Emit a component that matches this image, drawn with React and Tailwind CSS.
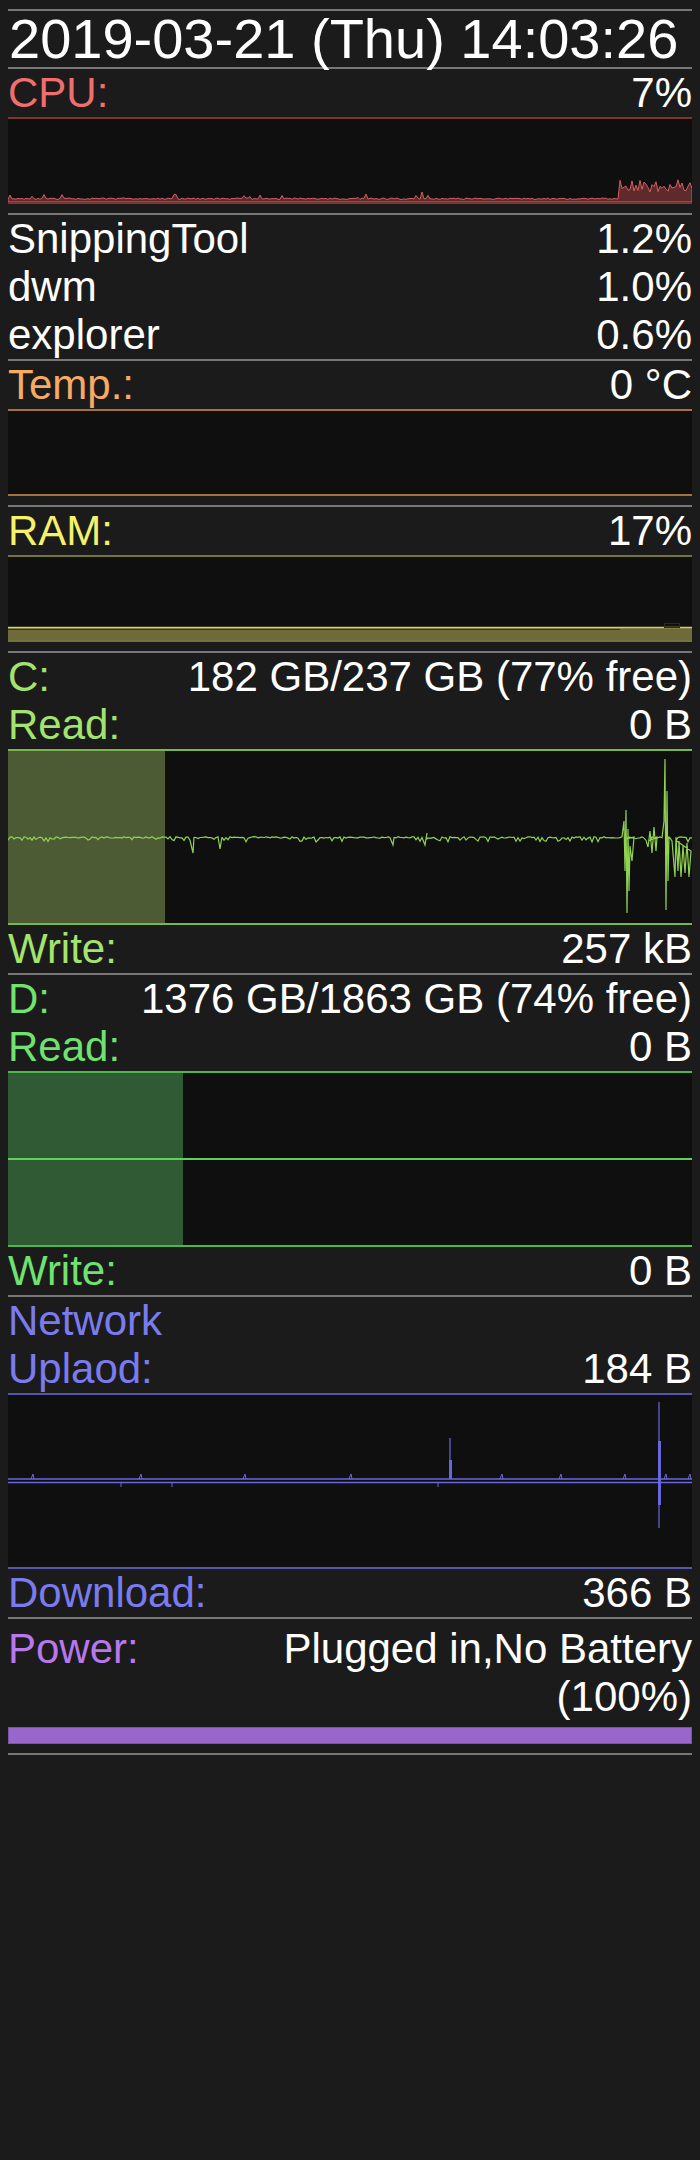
import React from 'react';

// deterministic noise so the graphs don't change between renders
const rng = (seed) => {
    let s = seed;
    return () => {
        s = (s * 16807) % 2147483647;
        return (s - 1) / 2147483646;
    };
};

const W = 684;

const cpuPath = (() => {
    const r = rng(11);
    const pts = [];
    for (let x = 0; x <= W; x += 2) {
        let v;
        if (x < 611) {
            v = 2.5 + r() * 1.5;
            if (r() < 0.05) v += 1.5 + r() * 3;
            if (x === 414) v = 10;
        } else {
            v = 9 + r() * 8;
            if (r() < 0.18) v += 3 + r() * 9;
        }
        pts.push(`${x},${(83 - v).toFixed(1)}`);
    }
    return `M0,83 L${pts.join(' L')} L${W},83 Z`;
})();

const cReadPath = (() => {
    const r = rng(5);
    const c = 86;
    const spikes = {
        185: [[185, 102], [186, 86]],
        213: [[212, 98], [213, 92], [214, 86]],
        385: [[385, 94]],
        417: [[417, 94], [419, 82]],
        616: [[616, 70], [617, 120], [618, 59], [619, 162], [620, 78], [621, 140], [622, 95], [624, 110], [626, 86]],
        640: [[640, 96], [642, 80], [644, 102], [646, 76], [648, 100], [649, 86]],
        656: [[656, 70], [657, 8], [658, 159], [659, 40], [660, 130], [661, 86]],
        667: [[667, 126], [668, 86], [670, 120], [671, 90], [673, 126], [675, 95], [677, 122], [679, 92], [681, 126], [683, 100]],
    };
    const pts = [];
    for (let x = 0; x <= W; x += 2) {
        const key = Object.keys(spikes).find((k) => +k === x || +k === x + 1);
        if (key) {
            spikes[key].forEach(([px, py]) => pts.push(`${px},${py}`));
            continue;
        }
        const d = r() < 0.3 ? r() * 5 : r() * 1.5 - 0.3;
        pts.push(`${x},${(c + d).toFixed(1)}`);
    }
    return `M${pts.join(' L')}`;
})();

const Sep = () => <div className="h-[2px] bg-[#777777]" />;

const Row = ({ label, value, color }) => (
    <div className="flex h-[48px] justify-between leading-[48px] whitespace-nowrap">
        <span className={color}>{label}</span>
        <span className="text-white">{value}</span>
    </div>
);

const SmallChart = ({ border, children }) => (
    <div className="mb-[9px]">
        <div className={`h-[87px] border-y-2 bg-[#0f0f0f] ${border}`}>
            <svg width="100%" height="83" viewBox="0 0 684 83" preserveAspectRatio="none" className="block">
                {children}
            </svg>
        </div>
    </div>
);

const BigChart = ({ border, children }) => (
    <div className={`h-[176px] border-y-2 bg-[#0f0f0f] ${border}`}>
        <svg width="100%" height="172" viewBox="0 0 684 172" preserveAspectRatio="none" className="block">
            {children}
        </svg>
    </div>
);

const netBumps = [25, 133, 237, 343, 494, 553, 617, 658, 682];
const netTicks = [113, 164, 430];

export default function App() {
    return (
        <div className="min-h-[2160px] bg-[#1b1b1b] px-[8px] pt-[9px] font-['Liberation_Sans',Arial,sans-serif] text-[42px]">
            <Sep />
            <div className="h-[56px] whitespace-nowrap pl-[1px] text-[56px] leading-[56px] text-white">
                2019-03-21 (Thu) 14:03:26
            </div>
            <Sep />

            <Row label="CPU:" value="7%" color="text-[#f06e6e]" />
            <SmallChart border="border-[#7e3434]">
                <path d={cpuPath} fill="#5e2a2a" stroke="#d45f5f" strokeWidth="1" />
            </SmallChart>
            <Sep />
            <Row label="SnippingTool" value="1.2%" color="text-white" />
            <Row label="dwm" value="1.0%" color="text-white" />
            <Row label="explorer" value="0.6%" color="text-white" />
            <Sep />

            <Row label="Temp.:" value="0 °C" color="text-[#f7aa63]" />
            <SmallChart border="border-[#a8703a]" />
            <Sep />

            <Row label="RAM:" value="17%" color="text-[#f2f26b]" />
            <SmallChart border="border-[#74743a]">
                <rect x="0" y="70" width="684" height="13" fill="#6e6a3a" />
                <line x1="0" y1="70.5" x2="684" y2="70.5" stroke="#d2d06c" strokeWidth="1.5" />
                <line x1="0" y1="72.5" x2="612" y2="72.5" stroke="#34331e" strokeWidth="1" />
                <rect x="656.5" y="66.5" width="15" height="4" fill="none" stroke="#2c2b18" strokeWidth="1" />
            </SmallChart>
            <Sep />

            <Row label="C:" value="182 GB/237 GB (77% free)" color="text-[#a2e46e]" />
            <Row label="Read:" value="0 B" color="text-[#a2e46e]" />
            <BigChart border="border-[#78b84a]">
                <rect x="0" y="0" width="157" height="172" fill="#4c5b33" />
                <path d={cReadPath} fill="none" stroke="#8fd254" strokeWidth="1.2" />
            </BigChart>
            <Row label="Write:" value="257 kB" color="text-[#a2e46e]" />
            <Sep />

            <Row label="D:" value="1376 GB/1863 GB (74% free)" color="text-[#6fe26f]" />
            <Row label="Read:" value="0 B" color="text-[#6fe26f]" />
            <BigChart border="border-[#4cb84c]">
                <rect x="0" y="0" width="175" height="172" fill="#305a33" />
                <line x1="0" y1="86" x2="684" y2="86" stroke="#5cd25c" strokeWidth="2" />
            </BigChart>
            <Row label="Write:" value="0 B" color="text-[#6fe26f]" />
            <Sep />

            <Row label="Network" value="" color="text-[#7b7bf0]" />
            <Row label="Uplaod:" value="184 B" color="text-[#7b7bf0]" />
            <BigChart border="border-[#5555aa]">
                <line x1="0" y1="84" x2="684" y2="84" stroke="#6868dc" strokeWidth="1.5" />
                <line x1="0" y1="87.5" x2="684" y2="87.5" stroke="#6868dc" strokeWidth="1.5" />
                {netBumps.map((x) => (
                    <path key={x} d={`M${x - 2},84 L${x},79 L${x + 1},84`} fill="none" stroke="#6868dc" strokeWidth="1" />
                ))}
                {netTicks.map((x) => (
                    <line key={x} x1={x} y1="88" x2={x} y2="92" stroke="#6868dc" strokeWidth="1" />
                ))}
                <line x1="442" y1="43" x2="442" y2="84" stroke="#6868dc" strokeWidth="1.2" />
                <rect x="441" y="65" width="3" height="19" fill="#6868dc" />
                <line x1="651" y1="7" x2="651" y2="133" stroke="#6868dc" strokeWidth="1.2" />
                <rect x="650" y="46" width="3" height="64" fill="#6868dc" />
            </BigChart>
            <Row label="Download:" value="366 B" color="text-[#7b7bf0]" />
            <Sep />

            <div className="flex justify-between pt-[6px] leading-[48px]">
                <span className="text-[#b977ee]">Power:</span>
                <div className="text-right text-white">
                    <div>Plugged in,No Battery</div>
                    <div>(100%)</div>
                </div>
            </div>
            <div className="mt-[6px] h-[17px] border border-[#7d52a8] bg-[#9966cc]" />
            <div className="mt-[9px]">
                <Sep />
            </div>
        </div>
    );
}
